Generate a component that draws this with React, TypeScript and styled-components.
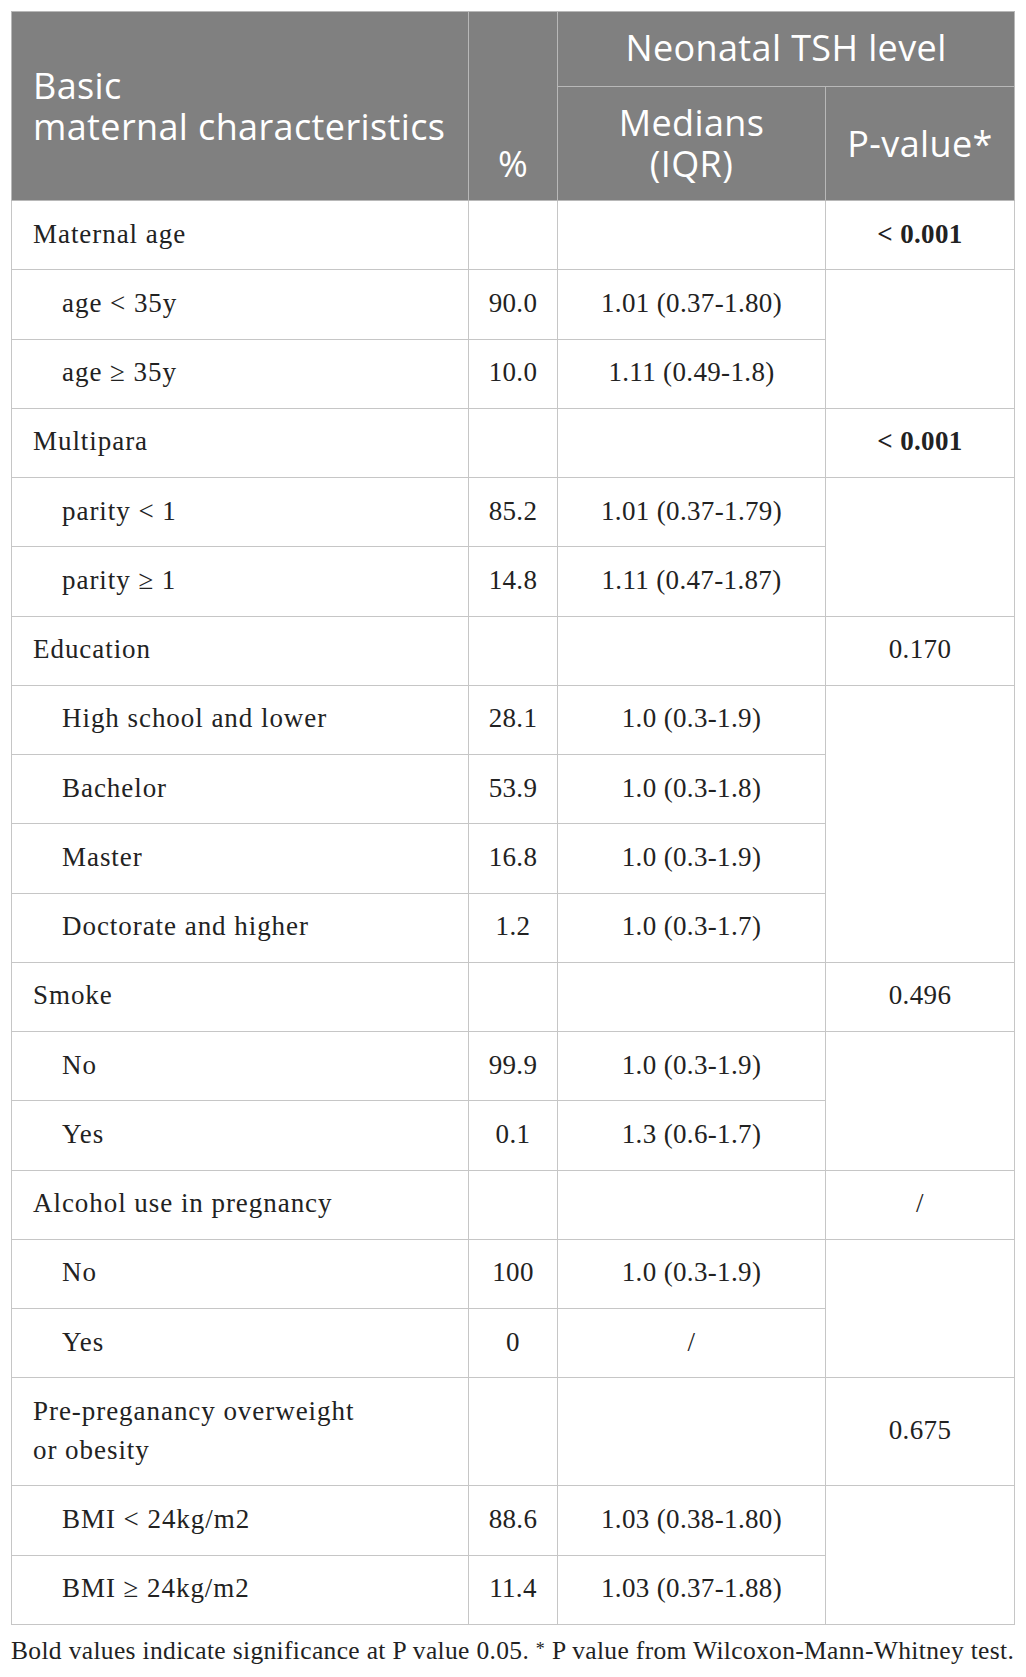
import React from "react";
import styled, { createGlobalStyle } from "styled-components";

const Global = createGlobalStyle`
  html, body { margin: 0; padding: 0; background: #ffffff; }
  body { width: 1026px; }
`;

const Page = styled.div`
  padding: 11px 12px 0 11px;
  box-sizing: border-box;
  width: 1026px;
`;

const Table = styled.table`
  border-collapse: collapse;
  width: 1003px;
  table-layout: fixed;
  font-family: "Liberation Serif", "Times New Roman", serif;
  color: #222222;
`;

const HeadRow = styled.tr<{ $h: number }>`
  height: ${(p) => p.$h}px;
`;

const HeadCell = styled.th<{ $align?: string; $valign?: string; $pad?: string }>`
  background: #808080;
  color: #ffffff;
  font-family: "Open Sans", "Noto Sans", sans-serif;
  font-weight: 400;
  font-size: 36px;
  line-height: 41px;
  letter-spacing: 0.38px;
  text-align: ${(p) => p.$align || "center"};
  vertical-align: ${(p) => p.$valign || "middle"};
  border: 1px solid #b8b8b8;
  padding: ${(p) => p.$pad || "0"};
`;

const Row = styled.tr<{ $tall?: boolean }>`
  height: ${(p) => (p.$tall ? "108px" : "69.25px")};
`;

const Cell = styled.td<{ $indent?: boolean; $label?: boolean; $bold?: boolean }>`
  border: 1px solid #c6c6c6;
  font-size: 27px;
  line-height: 39px;
  letter-spacing: ${(p) => (p.$label ? "0.95px" : "0.35px")};
  padding: 0 ${(p) => (p.$label ? "10px" : "0")} 2px
    ${(p) => (p.$indent ? "50px" : p.$label ? "21px" : "0")};
  text-align: ${(p) => (p.$label ? "left" : "center")};
  vertical-align: middle;
  font-weight: ${(p) => (p.$bold ? 700 : 400)};
`;

const Note = styled.p`
  margin: 9px 0 0 0;
  font-family: "Liberation Serif", "Times New Roman", serif;
  font-size: 25.5px;
  line-height: 30px;
  color: #222222;
  letter-spacing: 0.34px;
  white-space: nowrap;
`;

const Star = styled.span`
  font-size: 18px;
  vertical-align: 4px;
`;

type Group = {
  label: React.ReactNode;
  p: string;
  bold?: boolean;
  tall?: boolean;
  items: [string, string, string][];
};

const groups: Group[] = [
  {
    label: "Maternal age",
    p: "< 0.001",
    bold: true,
    items: [
      ["age < 35y", "90.0", "1.01 (0.37-1.80)"],
      ["age ≥ 35y", "10.0", "1.11 (0.49-1.8)"],
    ],
  },
  {
    label: "Multipara",
    p: "< 0.001",
    bold: true,
    items: [
      ["parity < 1", "85.2", "1.01 (0.37-1.79)"],
      ["parity ≥ 1", "14.8", "1.11 (0.47-1.87)"],
    ],
  },
  {
    label: "Education",
    p: "0.170",
    items: [
      ["High school and lower", "28.1", "1.0 (0.3-1.9)"],
      ["Bachelor", "53.9", "1.0 (0.3-1.8)"],
      ["Master", "16.8", "1.0 (0.3-1.9)"],
      ["Doctorate and higher", "1.2", "1.0 (0.3-1.7)"],
    ],
  },
  {
    label: "Smoke",
    p: "0.496",
    items: [
      ["No", "99.9", "1.0 (0.3-1.9)"],
      ["Yes", "0.1", "1.3 (0.6-1.7)"],
    ],
  },
  {
    label: "Alcohol use in pregnancy",
    p: "/",
    items: [
      ["No", "100", "1.0 (0.3-1.9)"],
      ["Yes", "0", "/"],
    ],
  },
  {
    label: (
      <>
        Pre-preganancy overweight
        <br />
        or obesity
      </>
    ),
    p: "0.675",
    tall: true,
    items: [
      ["BMI < 24kg/m2", "88.6", "1.03 (0.38-1.80)"],
      ["BMI ≥ 24kg/m2", "11.4", "1.03 (0.37-1.88)"],
    ],
  },
];

export default function App() {
  return (
    <Page>
      <Global />
      <Table>
        <colgroup>
          <col style={{ width: 457 }} />
          <col style={{ width: 89 }} />
          <col style={{ width: 268 }} />
          <col style={{ width: 189 }} />
        </colgroup>
        <thead>
          <HeadRow $h={75}>
            <HeadCell rowSpan={2} $align="left" $pad="0 10px 1px 21px">
              Basic
              <br />
              maternal characteristics
            </HeadCell>
            <HeadCell rowSpan={2} $valign="bottom" $pad="0 0 16px 0">
              %
            </HeadCell>
            <HeadCell colSpan={2} $pad="0 0 3px 0">
              Neonatal TSH level
            </HeadCell>
          </HeadRow>
          <HeadRow $h={114}>
            <HeadCell $pad="0 0 1px 0">
              Medians
              <br />
              (IQR)
            </HeadCell>
            <HeadCell $pad="0 0 1px 0">P-value*</HeadCell>
          </HeadRow>
        </thead>
        <tbody>
          {groups.map((g, gi) => (
            <React.Fragment key={gi}>
              <Row $tall={g.tall}>
                <Cell $label>{g.label}</Cell>
                <Cell />
                <Cell />
                <Cell $bold={g.bold}>{g.p}</Cell>
              </Row>
              {g.items.map((it, ii) => (
                <Row key={ii}>
                  <Cell $label $indent>
                    {it[0]}
                  </Cell>
                  <Cell>{it[1]}</Cell>
                  <Cell>{it[2]}</Cell>
                  {ii === 0 && <Cell rowSpan={g.items.length} />}
                </Row>
              ))}
            </React.Fragment>
          ))}
        </tbody>
      </Table>
      <Note>
        Bold values indicate significance at P value 0.05. <Star>*</Star> P value from
        Wilcoxon-Mann-Whitney test.
      </Note>
    </Page>
  );
}
